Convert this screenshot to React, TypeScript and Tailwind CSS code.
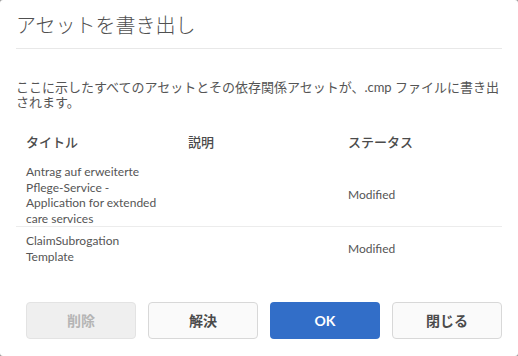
import React from "react";

const font = { fontFamily: '"Lato", "Noto Sans CJK JP", sans-serif' };

export default function App() {
  return (
    <div className="w-[518px] h-[356px] bg-[#9a9a9a]">
      <div
        className="w-[518px] h-[356px] bg-white rounded-[3px] text-[#4b4b4b] flex flex-col"
        style={font}
      >
        <div className="px-4 pt-[11px] pb-[9px]">
          <h1 className="text-[20px] leading-[28px] font-light text-[#505050]">
            アセットを書き出し
          </h1>
        </div>
        <div className="mx-4 h-px bg-[#e8e8e8]" />

        <p className="mx-4 mt-[31px] text-[13px] leading-[15px] text-[#555555]">
          ここに示したすべてのアセットとその依存関係アセットが、.cmp ファイルに書き出
          <br />
          されます。
        </p>

        <div className="mx-4 mt-[23px]">
          <div className="grid grid-cols-[172px_160px_1fr] text-[13px] leading-[18px] font-medium text-[#4b4b4b]">
            <div className="pl-[10px]">タイトル</div>
            <div>説明</div>
            <div>ステータス</div>
          </div>

          <div className="grid grid-cols-[172px_160px_1fr] items-center pt-[13px] border-b border-[#ececec] text-[12px] leading-[15.5px] text-[#555555]">
            <div className="pl-[10px]">
              Antrag auf erweiterte
              <br />
              Pflege-Service -
              <br />
              Application for extended
              <br />
              care services
            </div>
            <div />
            <div>Modified</div>
          </div>

          <div className="grid grid-cols-[172px_160px_1fr] items-center pt-[6px] text-[12px] leading-[15.5px] text-[#555555]">
            <div className="pl-[10px]">
              ClaimSubrogation
              <br />
              Template
            </div>
            <div />
            <div>Modified</div>
          </div>
        </div>

        <div className="mt-[38px] pl-[26px] pr-4 flex gap-3">
          <button className="w-[110px] h-[37px] rounded-[4px] border border-[#e3e3e3] bg-[#efefef] text-[14px] font-bold text-[#b5b5b5]">
            削除
          </button>
          <button className="w-[110px] h-[37px] rounded-[4px] border border-[#d8d8d8] bg-[#fafafa] text-[14px] font-bold text-[#4b4b4b]">
            解決
          </button>
          <button className="w-[110px] h-[37px] rounded-[4px] bg-[#326ec8] text-[14px] font-bold text-white">
            OK
          </button>
          <button className="w-[110px] h-[37px] rounded-[4px] border border-[#d8d8d8] bg-[#fafafa] text-[14px] font-bold text-[#4b4b4b]">
            閉じる
          </button>
        </div>
      </div>
    </div>
  );
}
